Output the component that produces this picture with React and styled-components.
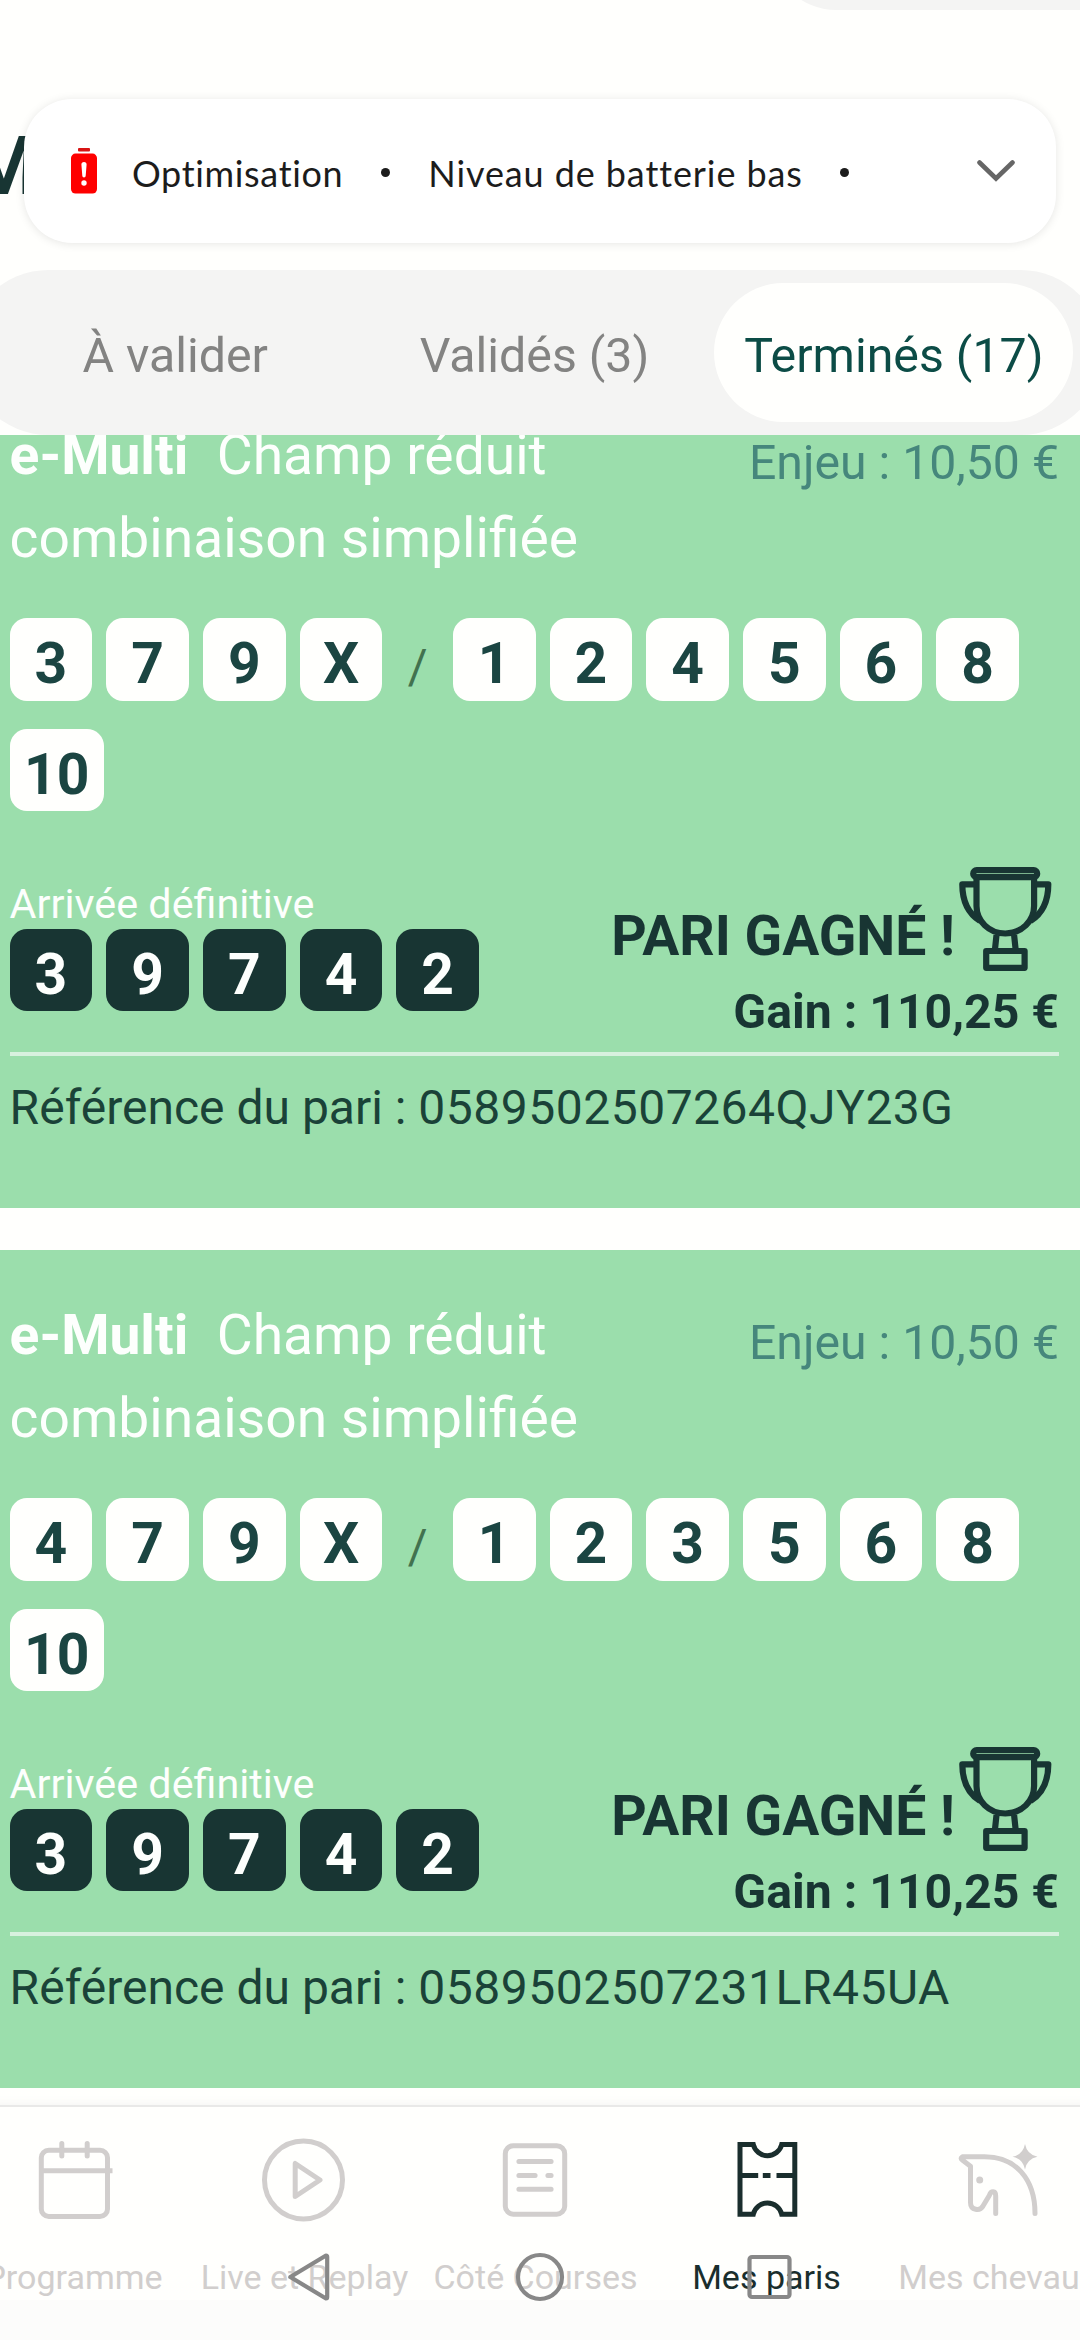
import React from "react";
import styled, { createGlobalStyle } from "styled-components";

const GlobalStyle = createGlobalStyle`
  *, *::before, *::after { box-sizing: border-box; }
  body { margin: 0; background: #fffffd; }
`;

const Screen = styled.div`
  position: relative;
  display: flex;
  flex-direction: column;
  width: 1080px;
  height: 2340px;
  overflow: hidden;
  background: #fffffd;
  font-family: Roboto, "Liberation Sans", sans-serif;
`;

const Header = styled.header`
  flex: none;
  display: flex;
  flex-direction: column;
  height: 435px;
  overflow: hidden;
`;

const BalancePill = styled.div`
  flex: none;
  align-self: flex-end;
  width: 371px;
  height: 130px;
  margin: -120px -62px 0 0;
  border-radius: 65px;
  background: #f4f4f3;
`;

const PageTitle = styled.h1`
  flex: none;
  margin: 98px 0 0 -32px;
  height: 162px;
  font-size: 82px;
  line-height: 116px;
  font-weight: 700;
  color: #183533;
`;

const Tabs = styled.nav`
  flex: none;
  display: flex;
  align-items: center;
  width: 1137px;
  height: 165px;
  margin-left: -34px;
  padding: 0 29.5px;
  border-radius: 83px;
  background: #f4f4f3;
`;

const Tab = styled.div`
  flex: 1;
  display: flex;
  align-items: center;
  justify-content: center;
  height: 139px;
  padding-top: 6px;
  border-radius: 70px;
  font-size: 48.3px;
  white-space: nowrap;
  color: ${(p) => (p.$active ? "#0c4c46" : "#838382")};
  background: ${(p) => (p.$active ? "#fffffd" : "transparent")};
`;

const Notice = styled.aside`
  position: absolute;
  top: 99px;
  left: 24px;
  display: flex;
  align-items: center;
  width: 1032px;
  height: 144px;
  padding: 0 41px 0 47px;
  border-radius: 48px;
  background: #fff;
  box-shadow: 0 1px 10px rgba(0, 0, 0, 0.1);
  font-family: Lato, "Open Sans", sans-serif;
  font-size: 36px;
  letter-spacing: 0.65px;
  color: #1c1c1c;
`;

const NoticeText = styled.span`
  margin-left: ${(p) => p.$gap}px;
  padding-top: 3px;
  letter-spacing: ${(p) => p.$spacing || 0.65}px;
  white-space: nowrap;
`;

const Dot = styled.span`
  width: 9px;
  height: 9px;
  margin: 3px 0 0 ${(p) => p.$gap}px;
  border-radius: 50%;
  background: #1c1c1c;
`;

const Push = styled.span`
  margin-left: auto;
  display: flex;
`;

const BetList = styled.main`
  flex: none;
  display: flex;
  flex-direction: column;
  gap: 42px;
  height: 1670px;
  overflow: hidden;
`;

const Card = styled.article`
  flex: none;
  height: 838px;
  padding: 44px 21px 0 9.6px;
  background: #9bdeac;
  color: #183533;
  &:first-child { margin-top: -65px; }
`;

const CardHead = styled.div`
  display: flex;
  justify-content: space-between;
`;

const BetName = styled.h2`
  width: 620px;
  margin: 0;
  font-size: 55.2px;
  line-height: 82.7px;
  font-weight: 400;
  color: #fdfffd;
  b { margin-right: 28.5px; }
`;

const Stake = styled.div`
  margin-top: 17px;
  font-size: 48.2px;
  line-height: 64px;
  color: #46877c;
`;

const Picks = styled.div`
  display: flex;
  flex-wrap: wrap;
  gap: 27.7px 14px;
  margin-top: ${(p) => p.$top || 0}px;
`;

const Chip = styled.span`
  display: flex;
  align-items: center;
  justify-content: center;
  min-width: 82.7px;
  height: 82.7px;
  padding: 8px 14.5px 0;
  border-radius: 17px;
  font-size: 57px;
  font-weight: 700;
  color: ${(p) => (p.$dark ? "#fdfffd" : "#1b4542")};
  background: ${(p) => (p.$dark ? "#183533" : "#fffffd")};
`;

const Slash = styled.span`
  width: 42.5px;
  text-align: center;
  font-size: 48px;
  line-height: 97px;
  height: 82.7px;
  color: #42724f;
`;

const Result = styled.div`
  display: flex;
  justify-content: space-between;
  height: 185.3px;
  margin-top: 55.3px;
`;

const Arrival = styled.div`
  padding-top: 12px;
`;

const ArrivalLabel = styled.div`
  font-size: 41.3px;
  line-height: 50px;
  color: #fdfffd;
`;

const Outcome = styled.div`
  display: flex;
  flex-direction: column;
  align-items: flex-end;
`;

const Won = styled.div`
  display: flex;
  margin-right: 7px;
  font-size: 55.2px;
  line-height: 64px;
  font-weight: 700;
  span { padding-top: 37px; margin-right: 4px; }
`;

const Gain = styled.div`
  margin-top: 13px;
  font-size: 48.2px;
  line-height: 56px;
  font-weight: 700;
`;

const Rule = styled.hr`
  height: 4px;
  margin: 0;
  border: 0;
  background: #d8f1df;
`;

const Reference = styled.div`
  margin-top: 22px;
  font-size: 48px;
  line-height: 60px;
  color: #1a4238;
  span { letter-spacing: 0.5px; }
`;

const BottomBar = styled.nav`
  flex: none;
  display: flex;
  width: 1155px;
  height: 235px;
  margin-left: -42px;
  border-top: 2px solid #e9e9e8;
  box-shadow: 0 -2px 10px rgba(0, 0, 0, 0.04);
  background: linear-gradient(#fffffd 193px, #fcfcfb 193px);
`;

const NavItem = styled.div`
  flex: 1;
  display: flex;
  flex-direction: column;
  align-items: center;
  padding-top: 28px;
  font-size: 34px;
  line-height: 40px;
  white-space: nowrap;
  color: ${(p) => (p.$active ? "#1a2e2d" : "#d1cecd")};
  span { margin-top: 32px; }
`;

const SystemKeys = styled.div`
  position: absolute;
  left: 0;
  top: 2252px;
  display: flex;
  justify-content: space-between;
  width: 1080px;
  padding: 0 285px;
`;

const stroke = {
  fill: "none",
  stroke: "currentColor",
  strokeWidth: 5,
  strokeLinecap: "round",
  strokeLinejoin: "round",
};

const BatteryIcon = () => (
  <svg width="26" height="46" viewBox="0 0 26 46">
    <rect x="7" y="0" width="12" height="3.6" rx="1" fill="#d81414" />
    <rect x="0" y="5.6" width="26" height="40" rx="4.5" fill="#fe0000" />
    <path d="M10.4 16.5a2.6 2.6 0 0 1 5.2 0l-.9 11.3a1.7 1.7 0 0 1-3.4 0z" fill="#fff" />
    <circle cx="13" cy="35" r="2.7" fill="#fff" />
  </svg>
);

const ChevronIcon = () => (
  <svg width="38" height="22" viewBox="0 0 38 22">
    <path d="M2.5 2.5 19 18.5 35.5 2.5" fill="none" stroke="#666" strokeWidth="4.6" strokeLinecap="round" />
  </svg>
);

const TrophyIcon = () => (
  <svg width="93" height="104" viewBox="0 0 93 104" fill="none" stroke="#183533" strokeWidth="6.2" strokeLinejoin="round">
    <rect x="14.2" y="3.2" width="64" height="7" rx="3.5" />
    <path d="M17.5 12V39C17.5 54 30 66.5 46.3 66.5S75.1 54 75.1 39V12" />
    <path d="M17 17.3H3.3C3.3 36 10 47 21 54M75.6 17.3H89.3C89.3 36 82.6 47 71.6 54" />
    <path d="M37.5 68 35.8 84M55.1 68 56.8 84" />
    <rect x="27.2" y="84" width="38.4" height="16.8" />
  </svg>
);

const CalendarIcon = () => (
  <svg width="84" height="90" viewBox="31.5 2135 84 90" {...stroke}>
    <rect x="40.8" y="2150.2" width="66.2" height="66.2" rx="7.5" />
    <path d="M61.3 2143.5V2156M86.7 2143.5V2156" />
    <path d="M41 2170.7H112" strokeLinecap="butt" />
  </svg>
);

const PlayIcon = () => (
  <svg width="84" height="90" viewBox="262.5 2135 84 90" overflow="visible" {...stroke}>
    <circle cx="303" cy="2180" r="39" />
    <path d="M294.7 2163.5V2196.5L319.5 2180Z" />
  </svg>
);

const NewsIcon = () => (
  <svg width="84" height="90" viewBox="493.5 2135 84 90" {...stroke}>
    <rect x="504.8" y="2145.7" width="59.4" height="68.5" rx="8" />
    <path d="M518.4 2161.4H550.6M518.4 2175.4H534.6M547.4 2175.4H550.6M518.4 2189.3H550.6" />
  </svg>
);

const TicketIcon = () => (
  <svg width="84" height="90" viewBox="724.5 2135 84 90" {...stroke} strokeLinecap="butt" strokeLinejoin="miter">
    <path d="M739.5 2144.5H752.8A14.6 14.6 0 0 0 781.2 2144.5H794.3V2214.2H781.2A14.6 14.6 0 0 0 752.8 2214.2H739.5Z" />
    <path d="M739.5 2175.4H757.7M762.3 2175.4H770M776 2175.4H794.3" />
  </svg>
);

const HorseIcon = () => (
  <svg width="84" height="90" viewBox="955.5 2135 84 90" {...stroke}>
    <path d="M1034.5 2213.5C1034.5 2179 1015 2156.8 984 2156.8H961.8Q959.4 2158.2 961.8 2160L970 2166.3V2202.5C970 2210.5 979.5 2211.5 982.5 2206L988.8 2195.5C990.5 2190.5 995.2 2190.5 995.2 2196V2213.5" />
    <circle cx="979.2" cy="2180" r="3.5" fill="currentColor" stroke="none" />
    <path d="M1024.5 2144Q1026.5 2154.6 1037 2156.7Q1026.5 2158.8 1024.5 2169.4Q1022.5 2158.8 1012 2156.7Q1022.5 2154.6 1024.5 2144Z" fill="currentColor" stroke="none" />
  </svg>
);

const key = { fill: "none", stroke: "#888", strokeWidth: 4.2, strokeLinejoin: "round" };

const BackKey = () => (
  <svg width="50" height="50" viewBox="285 2252 50 50" {...key}>
    <path d="M290.3 2277 326 2255.5Q327.2 2255.5 327.2 2257V2297Q327.2 2298.5 326 2298.5Z" />
  </svg>
);

const HomeKey = () => (
  <svg width="50" height="50" viewBox="515 2252 50 50" {...key}>
    <circle cx="540" cy="2277" r="22" />
  </svg>
);

const RecentsKey = () => (
  <svg width="50" height="50" viewBox="744.500 2252 50 50" {...key}>
    <rect x="749" y="2257" width="40" height="40" rx="2.5" />
  </svg>
);

const bets = [
  { base: ["3", "7", "9", "X"], field: ["1", "2", "4", "5", "6", "8", "10"], ref: "0589502507264QJY23G" },
  { base: ["4", "7", "9", "X"], field: ["1", "2", "3", "5", "6", "8", "10"], ref: "0589502507231LR45UA" },
];

const arrival = ["3", "9", "7", "4", "2"];

const navItems = [
  { label: "Programme", Icon: CalendarIcon },
  { label: "Live et Replay", Icon: PlayIcon },
  { label: "Côté Courses", Icon: NewsIcon },
  { label: "Mes paris", Icon: TicketIcon, active: true },
  { label: "Mes chevaux", Icon: HorseIcon },
];

function BetCard({ bet }) {
  return (
    <Card>
      <CardHead>
        <BetName>
          <b>e-Multi</b>Champ réduit
          <br />
          combinaison simplifiée
        </BetName>
        <Stake>Enjeu : 10,50 €</Stake>
      </CardHead>
      <Picks $top={39}>
        {bet.base.map((n) => <Chip key={n}>{n}</Chip>)}
        <Slash>/</Slash>
        {bet.field.map((n) => <Chip key={n}>{n}</Chip>)}
      </Picks>
      <Result>
        <Arrival>
          <ArrivalLabel>Arrivée définitive</ArrivalLabel>
          <Picks>
            {arrival.map((n) => <Chip key={n} $dark>{n}</Chip>)}
          </Picks>
        </Arrival>
        <Outcome>
          <Won>
            <span>PARI GAGNÉ !</span>
            <TrophyIcon />
          </Won>
          <Gain>Gain : 110,25 €</Gain>
        </Outcome>
      </Result>
      <Rule />
      <Reference>Référence du pari : <span>{bet.ref}</span></Reference>
    </Card>
  );
}

export default function App() {
  return (
    <>
      <GlobalStyle />
      <Screen>
        <Header>
          <BalancePill />
          <PageTitle>M</PageTitle>
          <Tabs>
            <Tab>À valider</Tab>
            <Tab>Validés (3)</Tab>
            <Tab $active>Terminés (17)</Tab>
          </Tabs>
        </Header>
        <BetList>
          {bets.map((bet) => <BetCard key={bet.ref} bet={bet} />)}
        </BetList>
        <BottomBar>
          {navItems.map(({ label, Icon, active }) => (
            <NavItem key={label} $active={active}>
              <Icon />
              <span>{label}</span>
            </NavItem>
          ))}
        </BottomBar>
        <Notice>
          <BatteryIcon />
          <NoticeText $gap={35}>Optimisation</NoticeText>
          <Dot $gap={38} />
          <NoticeText $gap={38} $spacing={0.9}>Niveau de batterie bas</NoticeText>
          <Dot $gap={37} />
          <Push><ChevronIcon /></Push>
        </Notice>
        <SystemKeys>
          <BackKey />
          <HomeKey />
          <RecentsKey />
        </SystemKeys>
      </Screen>
    </>
  );
}
